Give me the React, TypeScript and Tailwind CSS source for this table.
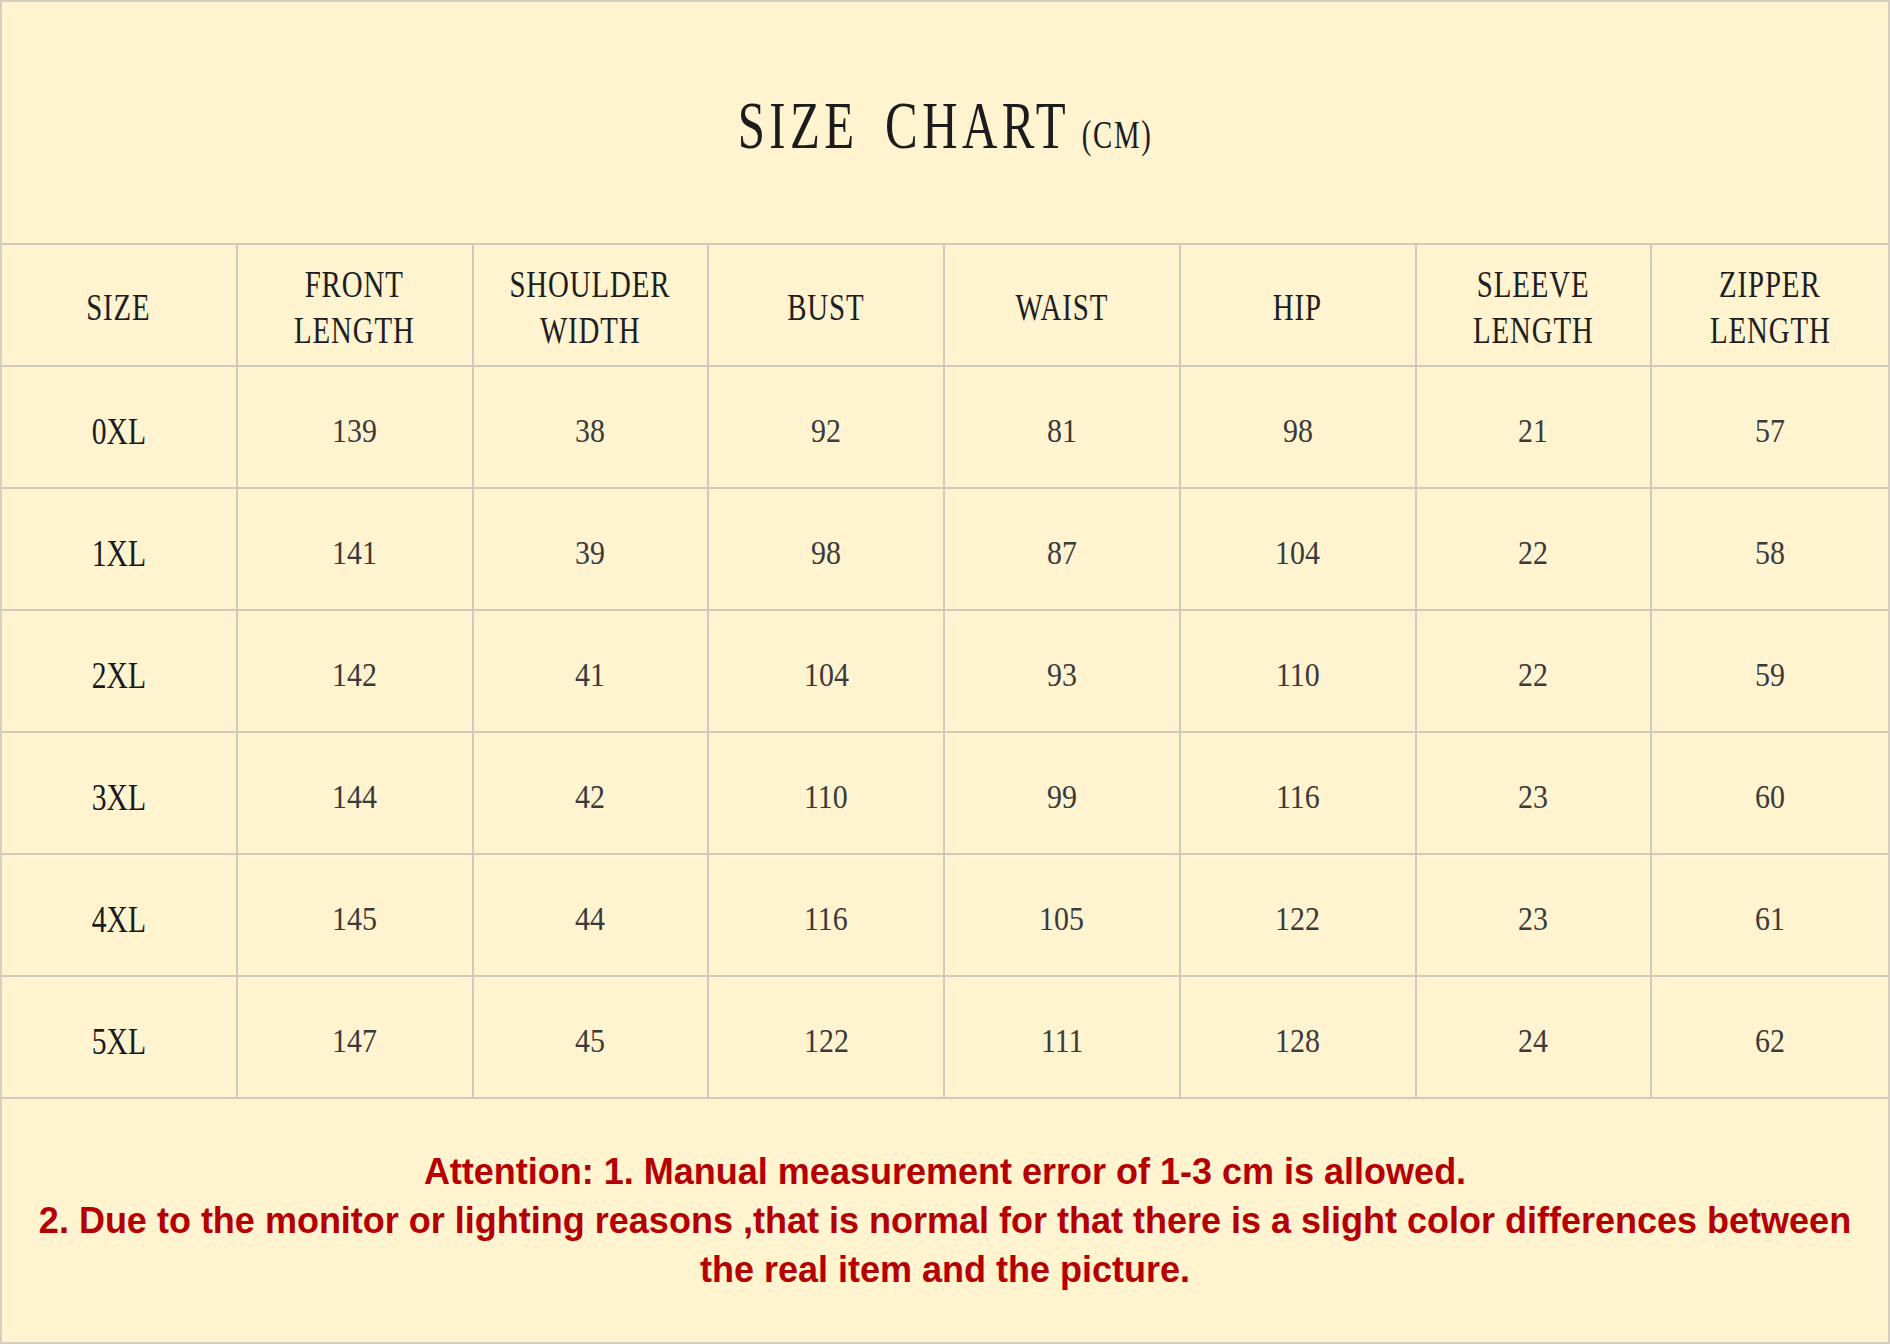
const headers = [
  ["SIZE"],
  ["FRONT", "LENGTH"],
  ["SHOULDER", "WIDTH"],
  ["BUST"],
  ["WAIST"],
  ["HIP"],
  ["SLEEVE", "LENGTH"],
  ["ZIPPER", "LENGTH"],
];

const rows = [
  ["0XL", "139", "38", "92", "81", "98", "21", "57"],
  ["1XL", "141", "39", "98", "87", "104", "22", "58"],
  ["2XL", "142", "41", "104", "93", "110", "22", "59"],
  ["3XL", "144", "42", "110", "99", "116", "23", "60"],
  ["4XL", "145", "44", "116", "105", "122", "23", "61"],
  ["5XL", "147", "45", "122", "111", "128", "24", "62"],
];

const serif = { fontFamily: '"Liberation Serif", "DejaVu Serif", serif' };

const App = () => {
  return (
    <div className="w-[1890px] h-[1344px] bg-[#fff3d0] border-2 border-[#d4cfbf] flex flex-col" style={serif}>
      {/* Title */}
      <div className="h-[241px] flex items-center justify-center text-[#1c1c1c]">
        <div className="inline-block scale-x-[0.72] whitespace-nowrap pt-1">
          <span className="text-[68px] leading-none tracking-[0.09em] [word-spacing:0.2em]">SIZE CHART</span>
          <span className="text-[40px] leading-none ml-4 tracking-[0.06em]">(CM)</span>
        </div>
      </div>

      {/* Table */}
      <div className="grid grid-cols-8 border-t-2 border-[#cfcab9]">
        {headers.map((lines, i) => (
          <div
            key={i}
            className={`h-[122px] flex flex-col items-center justify-center pt-1 border-b-2 border-[#cfcab9] ${
              i < 7 ? "border-r-2" : ""
            }`}
          >
            {lines.map((l) => (
              <span
                key={l}
                className="inline-block scale-x-[0.76] text-[38px] leading-[46px] tracking-[0.03em] text-[#1e1e1e] whitespace-nowrap"
              >
                {l}
              </span>
            ))}
          </div>
        ))}
        {rows.map((row, r) =>
          row.map((val, c) => (
            <div
              key={`${r}-${c}`}
              className={`h-[122px] flex items-center justify-center pt-2 border-b-2 border-[#cfcab9] ${
                c < 7 ? "border-r-2" : ""
              }`}
            >
              {c === 0 ? (
                <span className="inline-block scale-x-[0.8] text-[37px] leading-none text-[#1a1a1a]">{val}</span>
              ) : (
                <span className="inline-block scale-x-[0.88] text-[34px] leading-none text-[#3a3a3a]">{val}</span>
              )}
            </div>
          ))
        )}
      </div>

      {/* Notes */}
      <div
        className="flex-1 flex flex-col items-center justify-center text-[36px] leading-[49px] font-bold text-[#b40000] whitespace-nowrap"
        style={{ fontFamily: '"Liberation Sans", Arial, sans-serif' }}
      >
        <p>Attention: 1. Manual measurement error of 1-3 cm is allowed.</p>
        <p>2. Due to the monitor or lighting reasons ,that is normal for that there is a slight color differences between</p>
        <p>the real item and the picture.</p>
      </div>
    </div>
  );
};

export default App;
